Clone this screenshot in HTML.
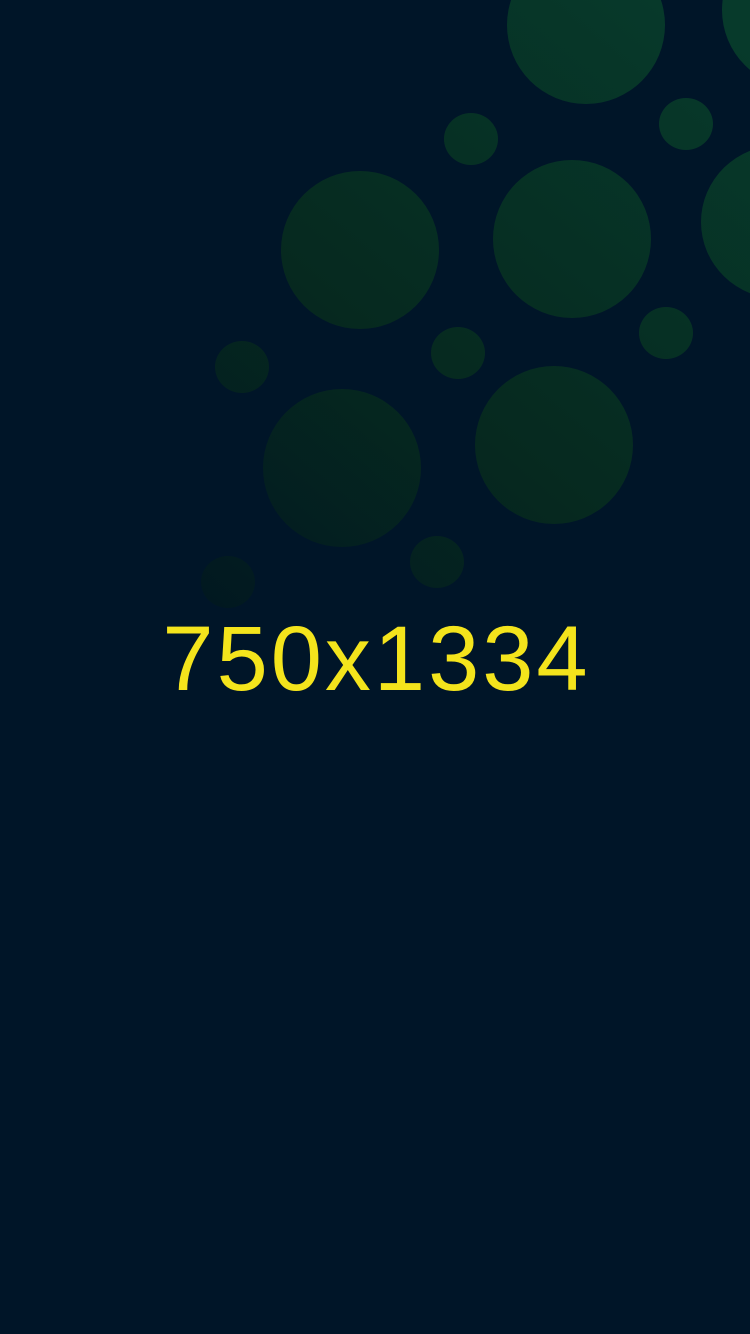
<!DOCTYPE html>
<html><head><meta charset="utf-8"><style>
html,body{margin:0;padding:0;background:#001528;}
body{width:750px;height:1334px;position:relative;overflow:hidden;}
svg{position:absolute;left:0;top:0;}
.t{position:absolute;left:0;width:750px;top:604px;text-align:center;font-family:"Liberation Sans",sans-serif;font-size:92px;color:#f4e41c;line-height:110px;letter-spacing:3px;text-indent:3px;}
</style></head><body>
<svg width="750" height="1334" viewBox="0 0 750 1334">
<defs><linearGradient id="g" gradientUnits="userSpaceOnUse" x1="700" y1="0" x2="200" y2="600">
<stop offset="0" stop-color="#073a2b"/><stop offset="0.6" stop-color="#06291f"/><stop offset="1" stop-color="#011820"/></linearGradient></defs>
<g fill="url(#g)">
<ellipse cx="586" cy="25" rx="79" ry="79"/>
<circle cx="800" cy="10" r="78"/>
<ellipse cx="471" cy="139" rx="27" ry="26"/>
<ellipse cx="686" cy="124" rx="27" ry="26"/>
<ellipse cx="360" cy="250" rx="79" ry="79"/>
<ellipse cx="572" cy="239" rx="79" ry="79"/>
<ellipse cx="780" cy="222" rx="79" ry="77"/>
<ellipse cx="458" cy="353" rx="27" ry="26"/>
<ellipse cx="666" cy="333" rx="27" ry="26"/>
<ellipse cx="242" cy="367" rx="27" ry="26"/>
<ellipse cx="342" cy="468" rx="79" ry="79"/>
<ellipse cx="554" cy="445" rx="79" ry="79"/>
<ellipse cx="437" cy="562" rx="27" ry="26"/>
<ellipse cx="228" cy="582" rx="27" ry="26"/>
</g></svg>
<div class="t">750x1334</div>
</body></html>
